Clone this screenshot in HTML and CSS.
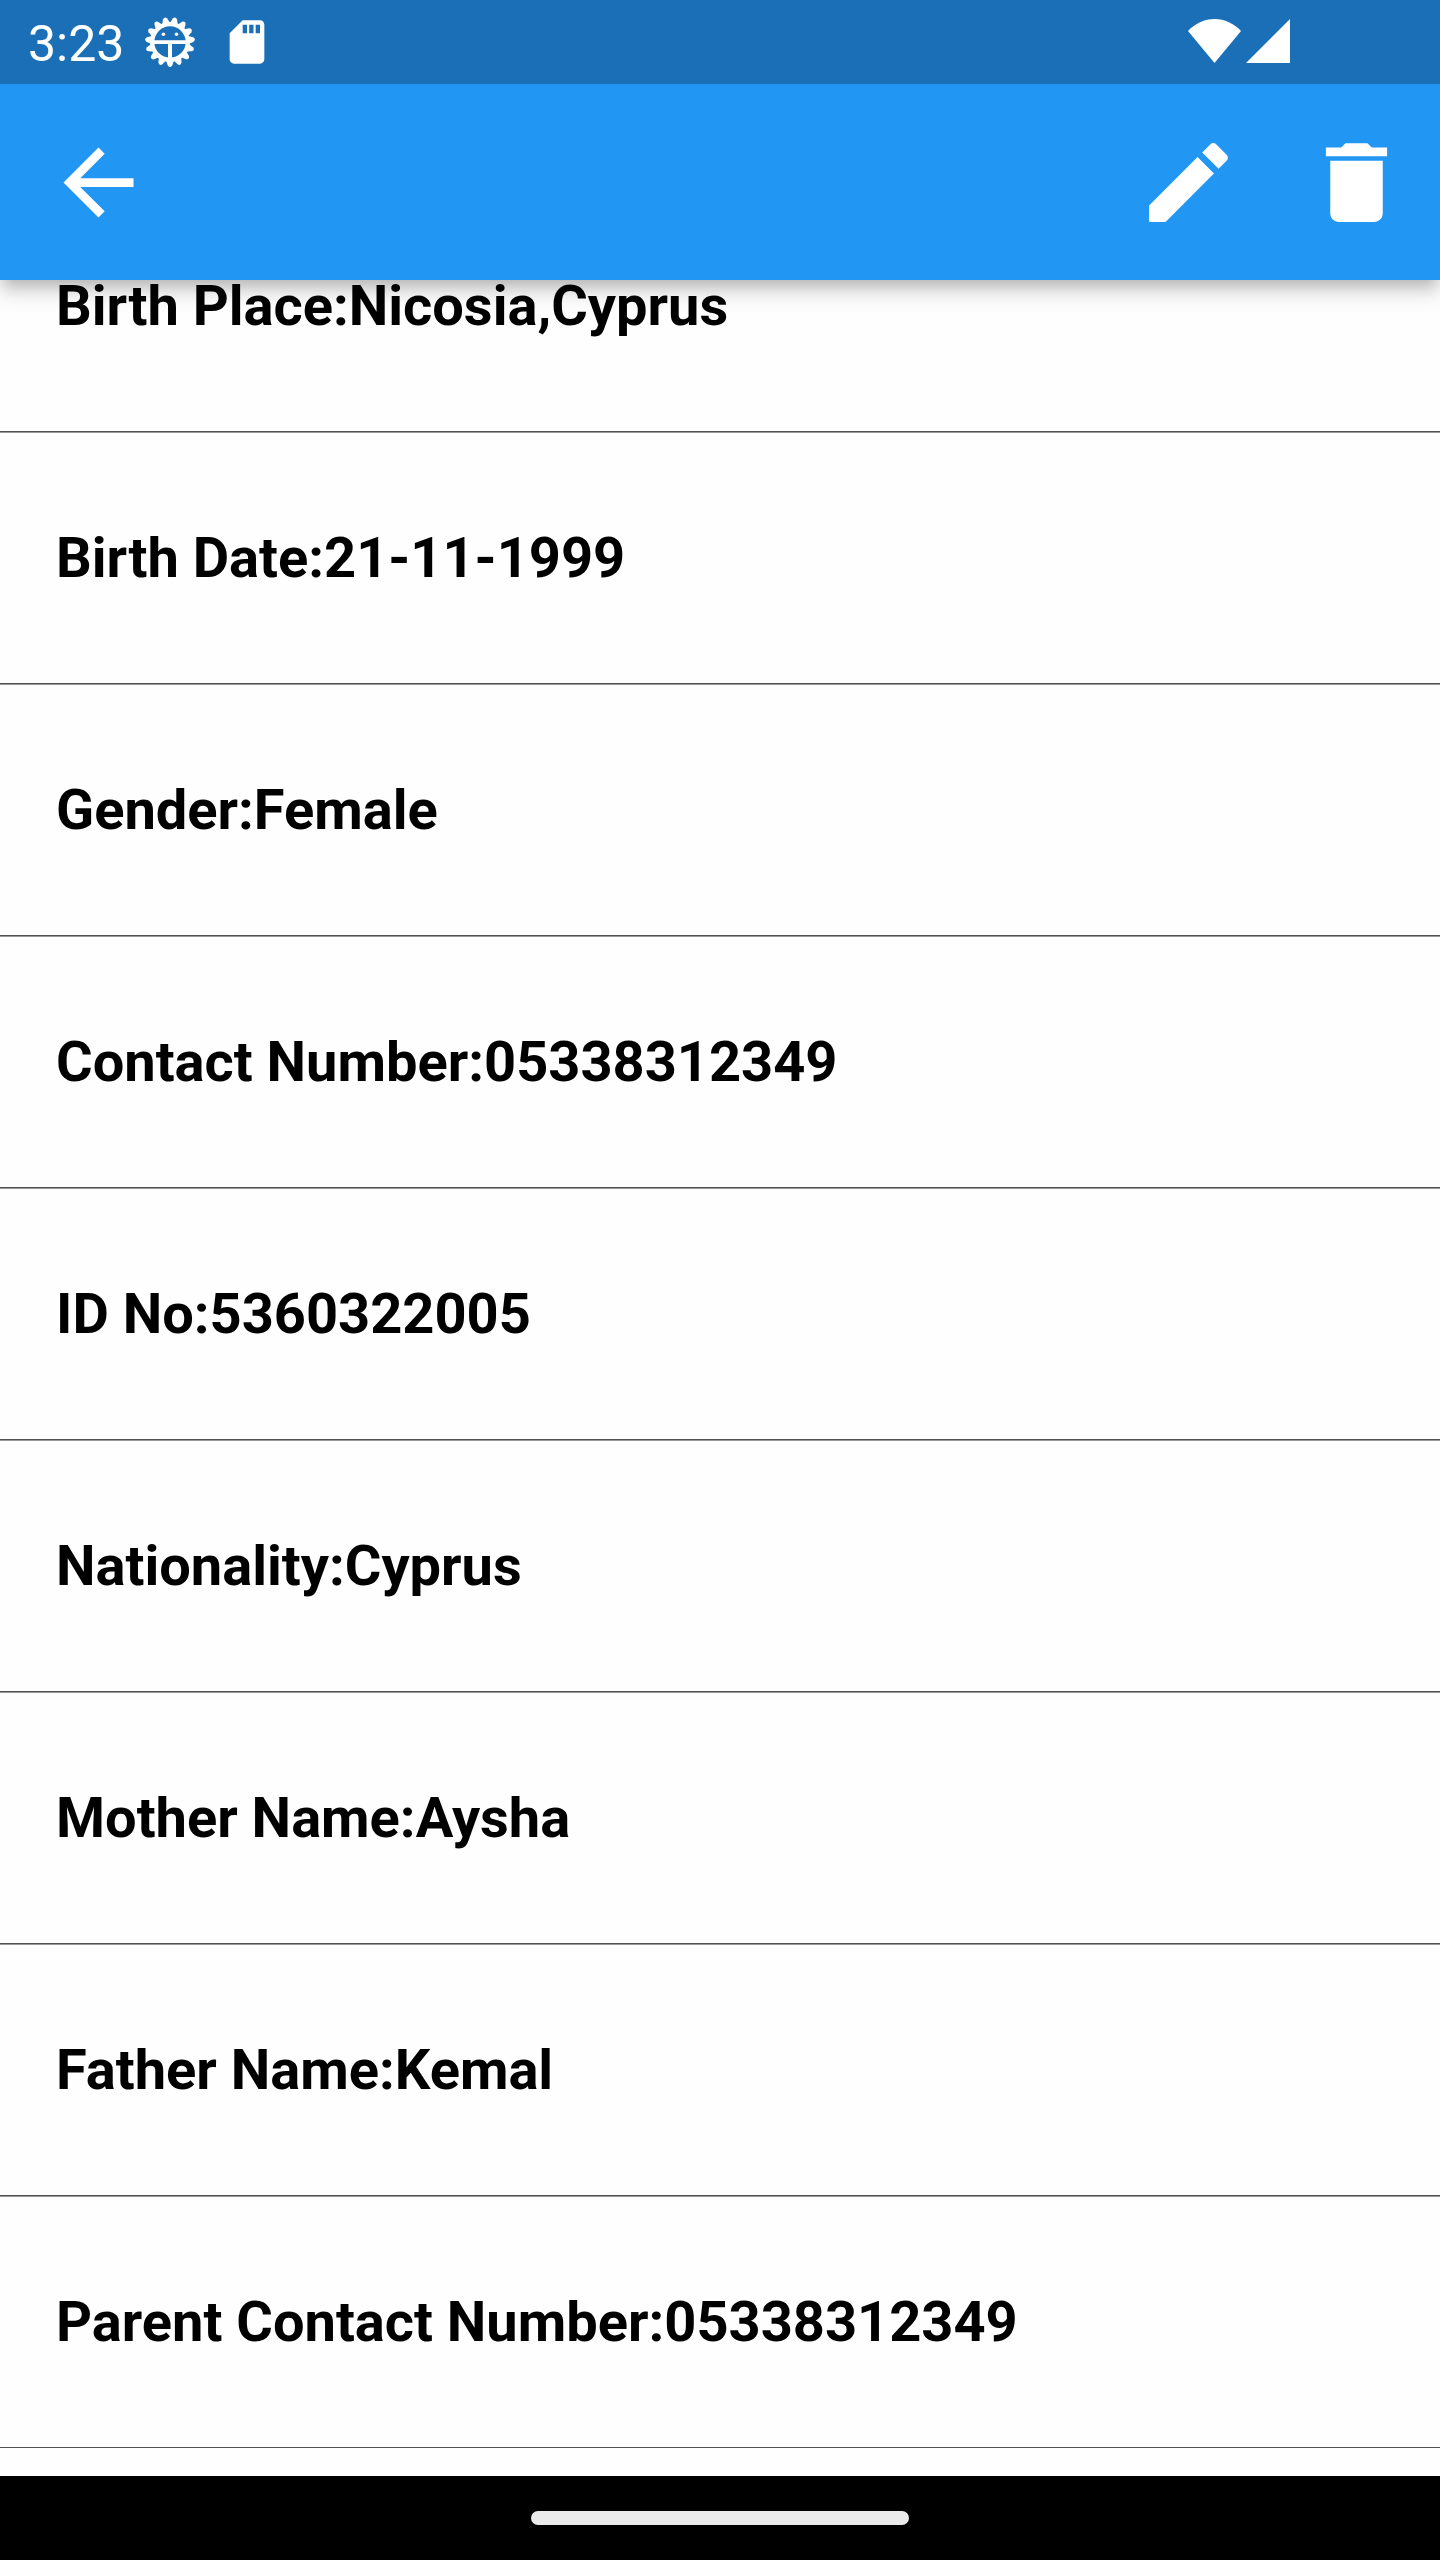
FILE: index.html
```html
<!DOCTYPE html>
<html lang="en">
<head>
<meta charset="utf-8">
<meta name="viewport" content="width=device-width, initial-scale=1">
<title>Student Details</title>
<link rel="stylesheet" href="styles.css">
</head>
<body>
<div class="status-bar">
  <span class="status-time">3:23</span>
  <div class="status-notifications">
    <svg class="status-icon" viewBox="0 0 52 52" aria-hidden="true">
      <defs><path id="tooth" d="M22 44.500 23.800 49.500Q26 52.500 28.200 49.500L30 44.500z"/></defs>
      <g fill="currentColor">
        <use href="#tooth"/>
        <use href="#tooth" transform="rotate(24 26 26)"/>
        <use href="#tooth" transform="rotate(48 26 26)"/>
        <use href="#tooth" transform="rotate(72 26 26)"/>
        <use href="#tooth" transform="rotate(96 26 26)"/>
        <use href="#tooth" transform="rotate(120 26 26)"/>
        <use href="#tooth" transform="rotate(144 26 26)"/>
        <use href="#tooth" transform="rotate(168 26 26)"/>
        <use href="#tooth" transform="rotate(192 26 26)"/>
        <use href="#tooth" transform="rotate(216 26 26)"/>
        <use href="#tooth" transform="rotate(240 26 26)"/>
        <use href="#tooth" transform="rotate(264 26 26)"/>
        <use href="#tooth" transform="rotate(288 26 26)"/>
        <use href="#tooth" transform="rotate(312 26 26)"/>
        <use href="#tooth" transform="rotate(336 26 26)"/>
        <path d="M9 24.300h34v3.700H28v15h-4V28H9z"/>
        <circle cx="19.400" cy="18.300" r="1.800"/>
        <circle cx="32.500" cy="18.300" r="1.800"/>
      </g>
      <circle cx="26" cy="26" r="17.800" fill="none" stroke="currentColor" stroke-width="4.200"/>
    </svg>
    <svg class="status-icon" viewBox="0 0 24 24" aria-hidden="true">
      <path fill="currentColor" d="M18 2h-8L4 8v12c0 1.100.9 2 2 2h12c1.100 0 2-.9 2-2V4c0-1.100-.9-2-2-2zm-6 6h-2V4h2v4zm3 0h-2V4h2v4zm3 0h-2V4h2v4z"/>
    </svg>
  </div>
  <div class="status-system">
    <svg class="wifi-icon" viewBox="0 0 53 44" aria-hidden="true"><path fill="currentColor" d="M26.500 44 0 12C7 4.500 16.500 0 26.500 0S46 4.500 53 12z"/></svg>
    <svg class="signal-icon" viewBox="0 0 44 44" aria-hidden="true"><path fill="currentColor" d="M44 0v44H0z"/></svg>
  </div>
</div>
<header class="app-bar">
  <button class="bar-button bar-button-back" type="button" aria-label="Back">
    <svg class="bar-icon" viewBox="0 0 24 24" aria-hidden="true"><path fill="currentColor" d="M20 11H7.830l5.590-5.590L12 4l-8 8 8 8 1.410-1.410L7.830 13H20v-2z"/></svg>
  </button>
  <div class="bar-actions">
    <button class="bar-button" type="button" aria-label="Edit">
      <svg class="bar-icon" viewBox="0 0 24 24" aria-hidden="true"><path fill="currentColor" d="M3 17.250V21h3.750L17.810 9.940l-3.750-3.750L3 17.250zM20.710 7.040c.39-.39.39-1.020 0-1.410l-2.340-2.340c-.39-.39-1.020-.39-1.410 0l-1.830 1.830 3.750 3.750 1.830-1.830z"/></svg>
    </button>
    <button class="bar-button" type="button" aria-label="Delete">
      <svg class="bar-icon" viewBox="0 0 24 24" aria-hidden="true"><path fill="currentColor" d="M6 19c0 1.100.9 2 2 2h8c1.100 0 2-.9 2-2V7H6v12zM19 4h-3.500l-1-1h-5l-1 1H5v2h14V4z"/></svg>
    </button>
  </div>
</header>
<main class="content">
  <ul class="detail-list">
    <li class="detail-row">Birth Place:Nicosia,Cyprus</li>
    <li class="detail-row">Birth Date:21-11-1999</li>
    <li class="detail-row">Gender:Female</li>
    <li class="detail-row">Contact Number:05338312349</li>
    <li class="detail-row">ID No:5360322005</li>
    <li class="detail-row">Nationality:Cyprus</li>
    <li class="detail-row">Mother Name:Aysha</li>
    <li class="detail-row">Father Name:Kemal</li>
    <li class="detail-row">Parent Contact Number:05338312349</li>
  </ul>
</main>
<div class="nav-bar"><div class="home-handle"></div></div>
</body>
</html>
```
FILE: styles.css
```css
* {
  box-sizing: border-box;
}

body {
  margin: 0;
  min-height: 100vh;
  display: flex;
  flex-direction: column;
  background: #fefefe;
  color: #000;
  font-family: Roboto, "Liberation Sans", sans-serif;
}

svg {
  display: block;
}

.status-bar {
  position: relative;
  z-index: 2;
  display: flex;
  align-items: center;
  gap: 20px;
  height: 84px;
  padding: 0 150px 0 28px;
  background: #1a6fb7;
  color: #fff;
}

.status-time {
  padding-top: 4px;
  font-size: 50px;
  line-height: 56px;
}

.status-notifications {
  display: flex;
  gap: 25px;
}

.status-icon {
  width: 52px;
  height: 52px;
}

.status-system {
  display: flex;
  gap: 5px;
  margin-left: auto;
  padding-bottom: 2px;
}

.wifi-icon {
  width: 53px;
  height: 44px;
}

.signal-icon {
  width: 44px;
  height: 44px;
}

.app-bar {
  position: relative;
  z-index: 1;
  display: flex;
  justify-content: space-between;
  height: 196px;
  background: #2196f3;
  color: #fff;
  box-shadow: 0 7px 14px -4px rgba(0, 0, 0, 0.2), 0 14px 18px 0 rgba(0, 0, 0, 0.14);
}

.bar-actions {
  display: flex;
}

.bar-button {
  display: flex;
  align-items: center;
  justify-content: center;
  width: 168px;
  padding: 0;
  border: 0;
  background: none;
  color: inherit;
  cursor: pointer;
}

.bar-button-back {
  width: 196px;
}

.bar-icon {
  width: 105px;
  height: 105px;
}

.content {
  flex: 1;
  overflow: hidden;
}

/* The list is scrolled part of the way under the app bar. */
.detail-list {
  margin: -100px 0 0;
  padding: 0;
  list-style: none;
}

.detail-row {
  padding: 93px 56px 91px;
  border-bottom: 1px solid #505050;
  box-shadow: 0 1px 0 #999;
  font-size: 56px;
  font-weight: 700;
  line-height: 67px;
}

.detail-row:last-child {
  box-shadow: none;
}

.nav-bar {
  display: flex;
  align-items: center;
  justify-content: center;
  height: 84px;
  background: #000;
}

.home-handle {
  width: 378px;
  height: 14px;
  border-radius: 7px;
  background: #ebebeb;
}
```
